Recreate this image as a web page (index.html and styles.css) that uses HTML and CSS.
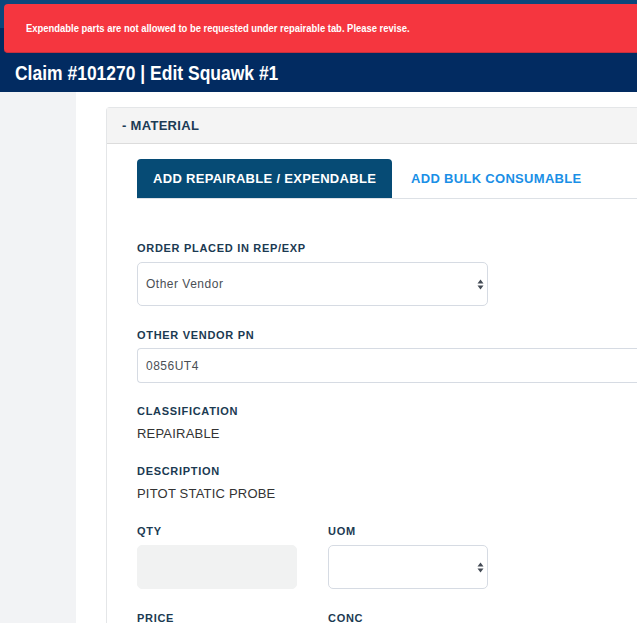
FILE: index.html
```html
<!DOCTYPE html>
<html>
<head>
<meta charset="utf-8">
<link rel="stylesheet" href="styles.css">
</head>
<body>
<header class="topbar">
  <div class="alert"><span class="alert-text">Expendable parts are not allowed to be requested under repairable tab. Please revise.</span></div>
  <h1 class="title"><span class="title-text">Claim #101270 | Edit Squawk #1</span></h1>
</header>
<div class="main">
  <aside class="sidebar"></aside>
  <section class="content">
    <div class="card">
      <div class="card-header">- MATERIAL</div>
      <div class="card-body">
        <div class="tabs">
          <div class="tab active">ADD REPAIRABLE / EXPENDABLE</div>
          <div class="tab">ADD BULK CONSUMABLE</div>
        </div>
        <div class="form">
          <div class="group g-first">
            <label class="label">ORDER PLACED IN REP/EXP</label>
            <div class="select-wrap wide">
              <select class="control select"><option>Other Vendor</option></select>
              <svg class="arrows" width="7" height="11" viewBox="0 0 7 11"><path d="M3.5 0.5 L6.5 4.5 H0.5 Z M3.5 10.5 L6.5 6.5 H0.5 Z" fill="#444b55"/></svg>
            </div>
          </div>
          <div class="group">
            <label class="label tight">OTHER VENDOR PN</label>
            <input class="control input full" value="0856UT4">
          </div>
          <div class="group">
            <div class="label">CLASSIFICATION</div>
            <div class="value">REPAIRABLE</div>
          </div>
          <div class="group">
            <div class="label">DESCRIPTION</div>
            <div class="value">PITOT STATIC PROBE</div>
          </div>
          <div class="row">
            <div class="group col g-row">
              <label class="label">QTY</label>
              <div class="control disabled"></div>
            </div>
            <div class="group col g-row">
              <label class="label">UOM</label>
              <div class="select-wrap">
                <select class="control select"><option></option></select>
                <svg class="arrows" width="7" height="11" viewBox="0 0 7 11"><path d="M3.5 0.5 L6.5 4.5 H0.5 Z M3.5 10.5 L6.5 6.5 H0.5 Z" fill="#444b55"/></svg>
              </div>
            </div>
          </div>
          <div class="row">
            <div class="group col"><label class="label">PRICE</label></div>
            <div class="group col"><label class="label">CONC</label></div>
          </div>
        </div>
      </div>
    </div>
  </section>
</div>
</body>
</html>
```
FILE: styles.css
```css
* { box-sizing: border-box; }
html, body { margin: 0; padding: 0; }
body {
  font-family: "Liberation Sans", Arial, sans-serif;
  background: #fff;
  width: 637px;
  height: 623px;
  overflow: hidden;
}
.topbar {
  background: linear-gradient(to bottom, #0b477b 0, #0b477b 28px, #022b61 28px);
  padding-top: 4px;
  height: 92px;
}
.alert {
  margin-left: 4px;
  height: 49px;
  background: #f5363f;
  border-radius: 4px 0 0 4px;
  color: #fff;
  font-size: 11px;
  font-weight: bold;
  padding: 0 0 0 22px;
  line-height: 49px;
  border-bottom: 1px solid #c7303d;
  white-space: nowrap;
}
.alert-text {
  display: inline-block;
  transform: scaleX(0.857);
  transform-origin: left center;
}
.title {
  margin: 0;
  color: #fff;
  font-size: 20px;
  font-weight: bold;
  padding-left: 15px;
  line-height: 40px;
  white-space: nowrap;
}
.title-text {
  display: inline-block;
  transform: scaleX(0.874);
  transform-origin: left center;
}
.main {
  display: flex;
  height: 531px;
}
.sidebar {
  width: 76px;
  flex: none;
  background: #f2f3f5;
}
.content {
  flex: 1;
  padding: 15px 0 0 30px;
  min-width: 0;
}
.card {
  border: 1px solid #e4e6e8;
  border-right: none;
  border-radius: 4px 0 0 4px;
  height: 600px;
  width: 600px;
}
.card-header {
  height: 36px;
  background: #f4f4f4;
  border-bottom: 1px solid #dcdcdc;
  padding-left: 15px;
  font-size: 13px;
  font-weight: bold;
  color: #1c3b55;
  line-height: 36px;
  letter-spacing: 0.3px;
}
.card-body {
  padding: 15px 0 0 30px;
}
.tabs {
  display: flex;
  border-bottom: 1px solid #dde1e6;
  height: 40px;
}
.tab {
  height: 39px;
  line-height: 39px;
  padding: 0 16px;
  font-size: 13px;
  font-weight: bold;
  color: #1a8fe6;
  letter-spacing: 0.3px;
  margin-right: 3px;
}
.tab.active {
  background: #064b75;
  color: #fff;
  border-radius: 4px 4px 0 0;
}
.form {
  padding-top: 42px;
}
.group {
  margin-bottom: 21px;
}
.g-first { margin-bottom: 22px; }
.g-row { margin-bottom: 22px; }
.label {
  display: block;
  font-size: 11px;
  font-weight: bold;
  color: #1b3a52;
  line-height: 14px;
  letter-spacing: 0.7px;
  margin-bottom: 7px;
}
.label.tight { margin-bottom: 6px; }
.value {
  font-size: 13px;
  color: #333;
  line-height: 18px;
  letter-spacing: 0.2px;
}
.control {
  display: block;
  height: 44px;
  border: 1px solid #d6dbe3;
  border-radius: 5px;
  background: #fff;
  font-family: "Liberation Sans", Arial, sans-serif;
  font-size: 12px;
  color: #4a4f55;
  letter-spacing: 0.5px;
  padding: 0 8px;
  outline: none;
}
.select-wrap {
  position: relative;
  width: 160px;
}
.select-wrap.wide { width: 351px; }
.select {
  width: 100%;
  -webkit-appearance: none;
  appearance: none;
}
.arrows {
  position: absolute;
  right: 4px;
  top: 17px;
}
.input {
  height: 35px;
  width: 520px;
  border-radius: 4px 0 0 4px;
  border-right: none;
}
.row {
  display: flex;
  gap: 31px;
}
.col { width: 160px; }
.disabled {
  width: 160px;
  background: #f1f2f2;
  border-color: #f1f2f2;
}
```
